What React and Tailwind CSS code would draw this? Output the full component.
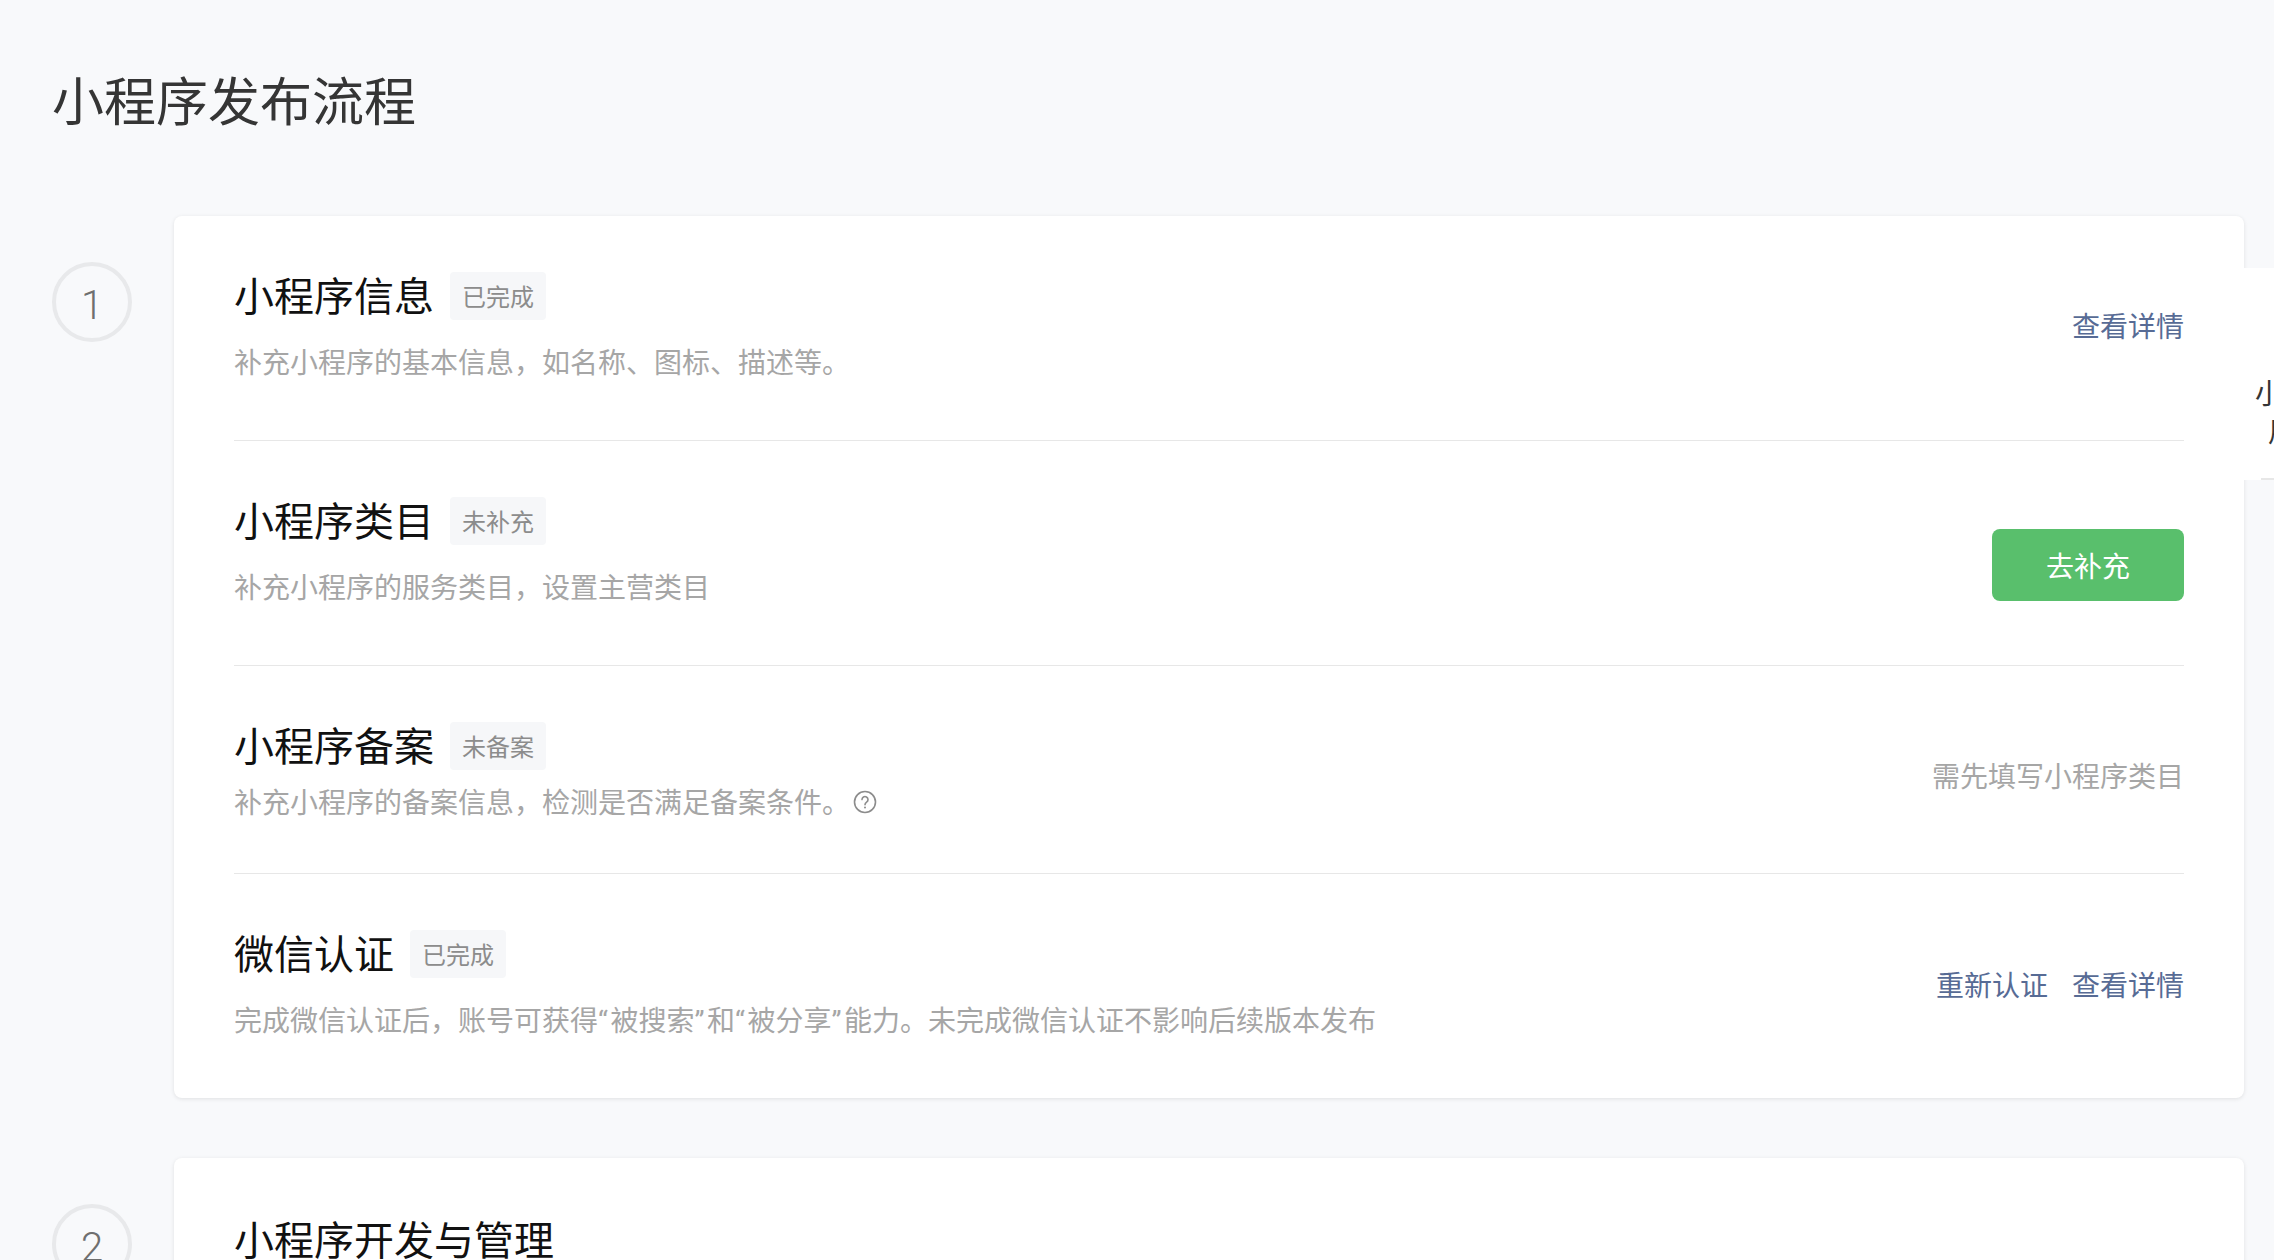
const fontStack = 'font-["Roboto","Noto_Sans_CJK_SC",sans-serif]';

function Tag({ children }) {
  return (
    <span className="ml-4 h-12 px-3 rounded bg-[#f6f7f9] text-[#8c8c8c] text-2xl leading-[52px]">{children}</span>
  );
}

function Link({ children }) {
  return <a className="text-[#576b95] text-[28px] leading-10">{children}</a>;
}

function Quote({ children }) {
  return <span className="tracking-[2.5px]">{children}</span>;
}

function Row({ title, tag, desc, descGap = 'mt-[22px]', top = 'pt-14', bottom = 'pb-[58px]', action, actionClass, help, last }) {
  return (
    <div className={`flex items-center justify-between ${top} ${bottom} ${last ? '' : 'border-b-[1.5px] border-[#e7e7e7]'}`}>
      <div>
        <div className="flex items-center">
          <h3 className="text-[40px] leading-[52px] -mb-1 text-[#111111]">{title}</h3>
          {tag && <Tag>{tag}</Tag>}
        </div>
        <p className={`${descGap} flex items-center text-[28px] leading-10 text-[#a6a6a6]`}>
          <span className="translate-y-[2px]">{desc}</span>
          {help && (
            <svg className="ml-[3px] w-6 h-6" viewBox="0 0 24 24" fill="none" stroke="#8c8c8c" strokeWidth="1.6">
              <circle cx="12" cy="12" r="10.5" />
              <path d="M9 9.6a3 3 0 1 1 4.6 2.5c-1 .7-1.6 1.2-1.6 2.6" strokeLinecap="round" />
              <circle cx="12" cy="17.6" r="1" fill="#8c8c8c" stroke="none" />
            </svg>
          )}
        </p>
      </div>
      <div className={actionClass}>{action}</div>
    </div>
  );
}

function Step({ num, children }) {
  return (
    <div className="flex items-start">
      <div className="w-[122px] shrink-0 pt-[46px]">
        <div className="w-20 h-20 pt-2 rounded-full border-4 border-[#e8e9eb] flex items-center justify-center text-[40px] font-light text-[#6f6f6f]">
          {num}
        </div>
      </div>
      <div className="flex-1 bg-white rounded-lg px-[60px] shadow-[0_1px_4px_rgba(0,0,0,0.1)]">{children}</div>
    </div>
  );
}

export default function App() {
  return (
    <div className={`relative h-screen overflow-hidden bg-[#f8f9fb] ${fontStack}`}>
      <div className="pl-[52px] pr-[30px]">
        <h1 className="pt-[69px] text-[52px] leading-[70px] text-[#353535]">小程序发布流程</h1>

        <div className="mt-[77px] flex flex-col gap-[60px]">
          <Step num="1">
            <Row
              title="小程序信息"
              tag="已完成"
              desc="补充小程序的基本信息，如名称、图标、描述等。"
              actionClass="mt-px"
              action={<Link>查看详情</Link>}
            />
            <Row
              title="小程序类目"
              tag="未补充"
              desc="补充小程序的服务类目，设置主营类目"
              actionClass="mt-[26px]"
              action={
                <button className="w-48 h-[72px] pt-[6px] rounded-lg bg-[#59bf6c] text-white text-[28px]">去补充</button>
              }
            />
            <Row
              title="小程序备案"
              tag="未备案"
              desc="补充小程序的备案信息，检测是否满足备案条件。"
              descGap="mt-3"
              bottom="pb-[51px]"
              help
              actionClass="mt-[11px]"
              action={<span className="text-[28px] leading-10 text-[#a6a6a6]">需先填写小程序类目</span>}
            />
            <Row
              last
              title="微信认证"
              tag="已完成"
              desc={
                <>
                  完成微信认证后，账号可获得<Quote>“</Quote>被搜索<Quote>”</Quote>和<Quote>“</Quote>被分享<Quote>”</Quote>能力。未完成微信认证不影响后续版本发布
                </>
              }
              actionClass="mt-[3px] flex gap-6"
              action={
                <>
                  <Link>重新认证</Link>
                  <Link>查看详情</Link>
                </>
              }
            />
          </Step>

          <Step num="2">
            <Row
              top="pt-[58px]"
              title="小程序开发与管理"
              desc="补充小程序的开发信息"
            />
          </Step>
        </div>
      </div>

      {/* side tab clipped by the window edge */}
      <div className="absolute right-0 top-[268px] w-[30px] h-[212px] bg-white overflow-hidden">
        <div className="absolute left-[11px] top-[108px] w-[84px] text-[28px] leading-[38px] text-[#353535]">
          <div>小程序</div>
          <div className="pl-[13px]">用户</div>
        </div>
        <div className="absolute left-[17px] bottom-0 w-full h-[2px] bg-[#e7e7e7]" />
      </div>
    </div>
  );
}
